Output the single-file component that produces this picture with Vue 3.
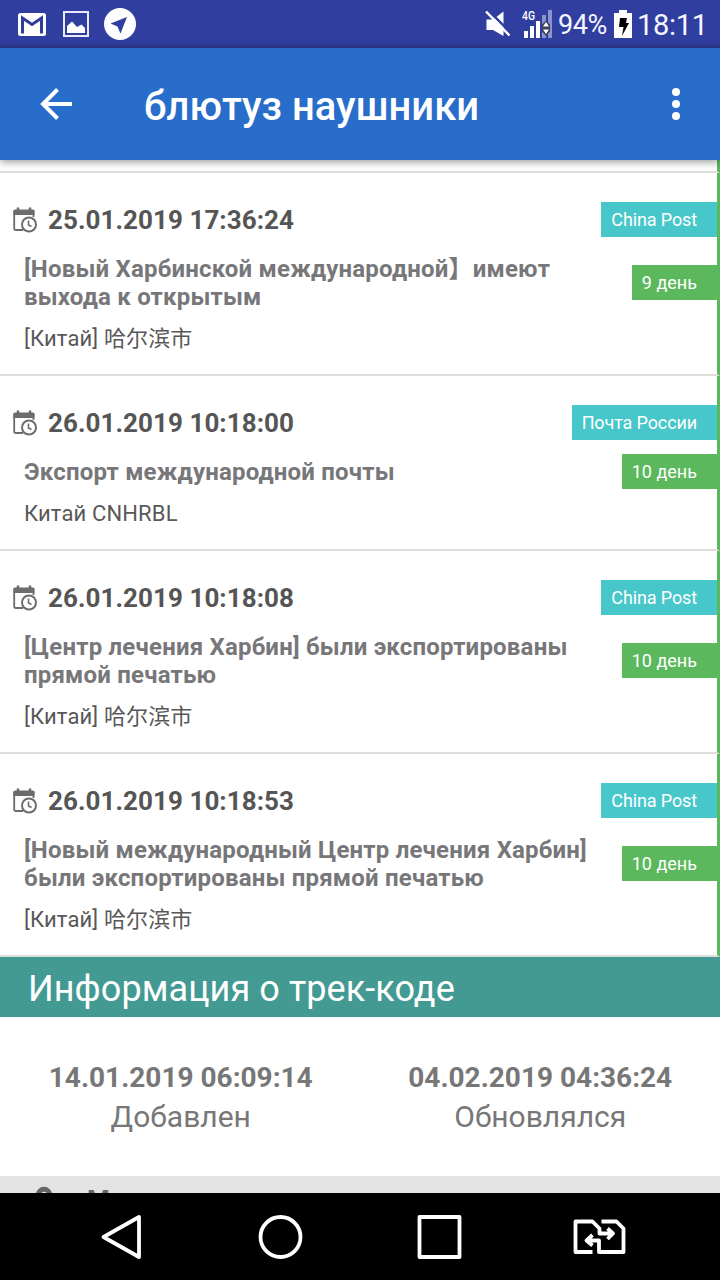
<template>
  <div class="screen">
    <header class="status">
      <div class="status-left">
        <svg class="mail" viewBox="0 0 28 23">
          <rect width="28" height="23" rx="2.500" fill="#fff" />
          <path d="M4.500 20.500V5L14 11.500L23.500 5V20.500" fill="none" stroke="#303f9f" stroke-width="3" />
        </svg>
        <svg class="photo" viewBox="0 0 26 26">
          <rect x="1" y="1" width="24" height="24" fill="none" stroke="#e8eaf6" stroke-width="2" />
          <path d="M4 22V15L9 10.500L14 16L18.500 13.500L22 17V22Z" fill="#fff" />
        </svg>
        <svg class="telegram" viewBox="0 0 32 32">
          <circle cx="16" cy="16" r="16" fill="#fff" />
          <path d="M23 9L6.500 15.500L13.500 18.500L16.500 25.500Z" fill="#303f9f" />
        </svg>
      </div>
      <div class="status-right">
        <svg class="mute" viewBox="0 0 26 28">
          <path d="M1.500 9.500H8L18.500 1.500V26L8 20H1.500Z" fill="#fff" />
          <path d="M3 0L27 24" stroke="#303f9f" stroke-width="2.500" />
          <path d="M1 1.500L24.500 25.500" stroke="#fff" stroke-width="2.500" />
        </svg>
        <svg class="signal" viewBox="0 0 31 30">
          <text x="0" y="11" class="net" textLength="13" lengthAdjust="spacingAndGlyphs">4G</text>
          <path d="M2 22h4v7H2zM8 17h4v12H8zM14 12h4v17h-4z" fill="#fff" />
          <path d="M20 6h4v23h-4zM26 1h4v28h-4z" fill="#8c94cb" />
          <path d="M24 11.500L28 15.500V22.500L24 27L20 22.500V15.500Z" fill="#3b3f5c" />
          <path d="M24 13L27 17.500H21ZM24 25L27 20.500H21Z" fill="#fff" />
        </svg>
        <span class="percent">94%</span>
        <svg class="battery" viewBox="0 0 18 28">
          <path d="M5 0h8v3h5v25H0V3h5z" fill="#fff" />
          <path d="M6 8h7l-1 5h3L8 26l1.500-9H5z" fill="#000" />
        </svg>
        <span class="clock">18:11</span>
      </div>
    </header>

    <nav class="toolbar">
      <svg class="back" viewBox="0 0 32 32">
        <path d="M32 16H3M17.500 1.500L3 16L17.500 30.500" fill="none" stroke="#fff" stroke-width="4" />
      </svg>
      <h1>блютуз наушники</h1>
      <svg class="more" viewBox="0 0 8 32">
        <circle cx="4" cy="4" r="4" />
        <circle cx="4" cy="16" r="4" />
        <circle cx="4" cy="28" r="4" />
      </svg>
    </nav>

    <main class="list">
      <div class="previous"></div>
      <section v-for="e in events" :key="e.date" class="event">
        <div class="row">
          <svg class="calendar" viewBox="0 0 24 26">
            <path d="M10 23H3Q1.200 23 1.200 21.200V4.500H20.500V10" fill="none" stroke="#6c6c6c" stroke-width="1.800" />
            <path d="M0.500 4Q0.500 2.500 2 2.500H20Q21.500 2.500 21.500 4V8H0.500Z" fill="#6c6c6c" />
            <path d="M5 0.500V4M17 0.500V4" stroke="#6c6c6c" stroke-width="2.500" />
            <circle cx="16" cy="17.500" r="7" fill="#fff" stroke="#6c6c6c" stroke-width="2" />
            <path d="M15.500 13.500V18L18.500 19.500" fill="none" stroke="#6c6c6c" stroke-width="1.600" />
          </svg>
          <span class="date">{{ e.date }}</span>
          <span class="badge post">{{ e.post }}</span>
        </div>
        <div class="row middle">
          <p class="title">{{ e.title }}</p>
          <span class="badge days">{{ e.days }} день</span>
        </div>
        <p class="place">{{ e.place }}</p>
      </section>
    </main>

    <h2>Информация о трек-коде</h2>
    <div class="info">
      <div class="cell">
        <b>14.01.2019 06:09:14</b>
        <span>Добавлен</span>
      </div>
      <div class="cell">
        <b>04.02.2019 04:36:24</b>
        <span>Обновлялся</span>
      </div>
    </div>
    <div class="peek">
      <svg class="pin" viewBox="0 0 18 24">
        <circle cx="9" cy="9" r="5.700" fill="none" stroke="#666" stroke-width="5" />
      </svg>
      <b>М</b>
    </div>

    <footer class="keys">
      <svg viewBox="0 0 54 46">
        <path d="M44 3V43L8.500 23Z" />
      </svg>
      <svg viewBox="0 0 54 46">
        <circle cx="26.500" cy="23" r="20" />
      </svg>
      <svg viewBox="0 0 54 46">
        <rect x="6.500" y="3" width="40" height="40" />
      </svg>
      <svg viewBox="0 0 54 46">
        <path d="M20.500 38H3.500V7.500H20.500L27.500 14.500V19.500H41M35.500 14.500L41 19.500L35.500 25" />
        <path d="M29.500 7.500H44.500L51.500 14.500V38H27V26.500H15M20.500 21L14.500 26.500L20.500 31.500" />
      </svg>
    </footer>
  </div>
</template>

<script setup>
const events = [
  {
    date: '25.01.2019 17:36:24',
    post: 'China Post',
    title: '[Новый Харбинской международной】имеют\nвыхода к открытым',
    days: 9,
    place: '[Китай] 哈尔滨市'
  },
  {
    date: '26.01.2019 10:18:00',
    post: 'Почта России',
    title: 'Экспорт международной почты',
    days: 10,
    place: 'Китай CNHRBL'
  },
  {
    date: '26.01.2019 10:18:08',
    post: 'China Post',
    title: '[Центр лечения Харбин] были экспортированы\nпрямой печатью',
    days: 10,
    place: '[Китай] 哈尔滨市'
  },
  {
    date: '26.01.2019 10:18:53',
    post: 'China Post',
    title: '[Новый международный Центр лечения Харбин]\nбыли экспортированы прямой печатью',
    days: 10,
    place: '[Китай] 哈尔滨市'
  }
]
</script>

<style>
body {
  margin: 0;
  background: #fff;
}
</style>

<style scoped>
.screen {
  width: 720px;
  height: 1280px;
  display: flex;
  flex-direction: column;
  overflow: hidden;
  background: #fff;
  font-family: Roboto, "Noto Sans CJK SC", sans-serif;
}

svg {
  display: block;
  flex: none;
}

h1,
h2,
p {
  margin: 0;
}

.status {
  flex: none;
  height: 48px;
  display: flex;
  justify-content: space-between;
  background: linear-gradient(#303f9f 42px, #2b388c);
  color: #f5f6ff;
}

.status-left,
.status-right {
  display: flex;
  align-items: center;
}

.status-left {
  padding-left: 18px;
}

.mail {
  width: 28px;
  height: 23px;
}

.photo {
  width: 26px;
  height: 26px;
  margin-left: 17px;
}

.telegram {
  width: 32px;
  height: 32px;
  margin-left: 15px;
}

.status-right {
  padding-right: 14px;
}

.mute {
  width: 26px;
  height: 28px;
}

.signal {
  width: 31px;
  height: 30px;
  margin-left: 11px;
}

.net {
  font-size: 12px;
  font-weight: 500;
  fill: #fff;
}

.percent {
  width: 49px;
  margin: 2px 0 0 5px;
  font-size: 27px;
  line-height: 32px;
  letter-spacing: -0.4px;
  white-space: nowrap;
}

.battery {
  width: 18px;
  height: 28px;
  margin-left: 7px;
}

.clock {
  width: 69px;
  margin: 2px 0 0 5px;
  font-size: 29px;
  line-height: 32px;
  letter-spacing: -0.3px;
  white-space: nowrap;
}

.toolbar {
  flex: none;
  position: relative;
  height: 112px;
  display: flex;
  align-items: center;
  padding: 0 40px;
  box-sizing: border-box;
  background: #286dca;
  box-shadow: 0 2px 8px rgba(0, 0, 0, 0.4);
}

.back {
  width: 32px;
  height: 32px;
}

h1 {
  flex: 1;
  margin: 6px 0 0 72px;
  color: #fff;
  font-size: 40px;
  font-weight: 500;
  line-height: 48px;
}

.more {
  width: 8px;
  height: 32px;
  fill: #fff;
}

.previous {
  height: 11px;
  border-bottom: 2px solid #dedede;
  border-right: 3px solid #5cb85c;
}

.event {
  padding: 29px 0 22px 24px;
  border-right: 3px solid #5cb85c;
  border-bottom: 2px solid #dedede;
}

.row {
  display: flex;
  align-items: center;
  justify-content: space-between;
}

.calendar {
  width: 24px;
  height: 26px;
  margin-left: -11px;
}

.date {
  flex: 1;
  margin: 1px 0 -1px 11px;
  color: #555;
  font-size: 26px;
  font-weight: 700;
  line-height: 35px;
  letter-spacing: 0.05px;
}

.badge {
  flex: none;
  height: 35px;
  padding: 0 20px 0 10px;
  color: #fff;
  font-size: 18px;
  line-height: 35px;
}

.post {
  background: #48c7ca;
  letter-spacing: -0.12px;
}

.days {
  margin: -4px 0 -3px;
  background: #5cb85c;
}

.middle {
  margin-top: 18px;
}

.title {
  color: #77777a;
  font-size: 24px;
  font-weight: 700;
  line-height: 28px;
  letter-spacing: 0.2px;
  white-space: pre;
}

.place {
  height: 26px;
  margin-top: 15px;
  color: #585858;
  font-size: 22px;
  line-height: 26px;
  letter-spacing: 0.14px;
}

h2 {
  flex: none;
  height: 60px;
  padding: 2px 0 0 28px;
  box-sizing: border-box;
  background: #439a92;
  color: #fff;
  font-size: 36px;
  font-weight: 400;
  line-height: 60px;
  letter-spacing: 0.08px;
}

.info {
  flex: none;
  height: 159px;
  display: grid;
  grid-template-columns: 1fr 1fr;
  padding: 41px 0 0 1px;
  box-sizing: border-box;
  color: #777;
}

.cell {
  display: flex;
  flex-direction: column;
  align-items: center;
  gap: 3px;
}

.cell b {
  font-size: 28px;
  line-height: 40px;
}

.cell span {
  font-size: 30px;
  line-height: 32px;
}

.peek {
  flex: none;
  height: 17px;
  display: flex;
  align-items: flex-start;
  overflow: hidden;
  padding: 0 35px;
  background: #e3e3e3;
  color: #666;
}

.pin {
  width: 18px;
  height: 24px;
  margin-top: 10px;
}

.peek b {
  margin: 7px 0 0 34px;
  font-size: 26px;
  line-height: 34px;
}

.keys {
  flex: 1;
  display: grid;
  grid-template-columns: repeat(4, 159px);
  place-content: center;
  justify-items: center;
  padding: 1px 0 0;
  background: #000;
}

.keys svg {
  width: 54px;
  height: 46px;
  fill: none;
  stroke: #fff;
  stroke-width: 3.8;
  stroke-linejoin: round;
}
</style>
